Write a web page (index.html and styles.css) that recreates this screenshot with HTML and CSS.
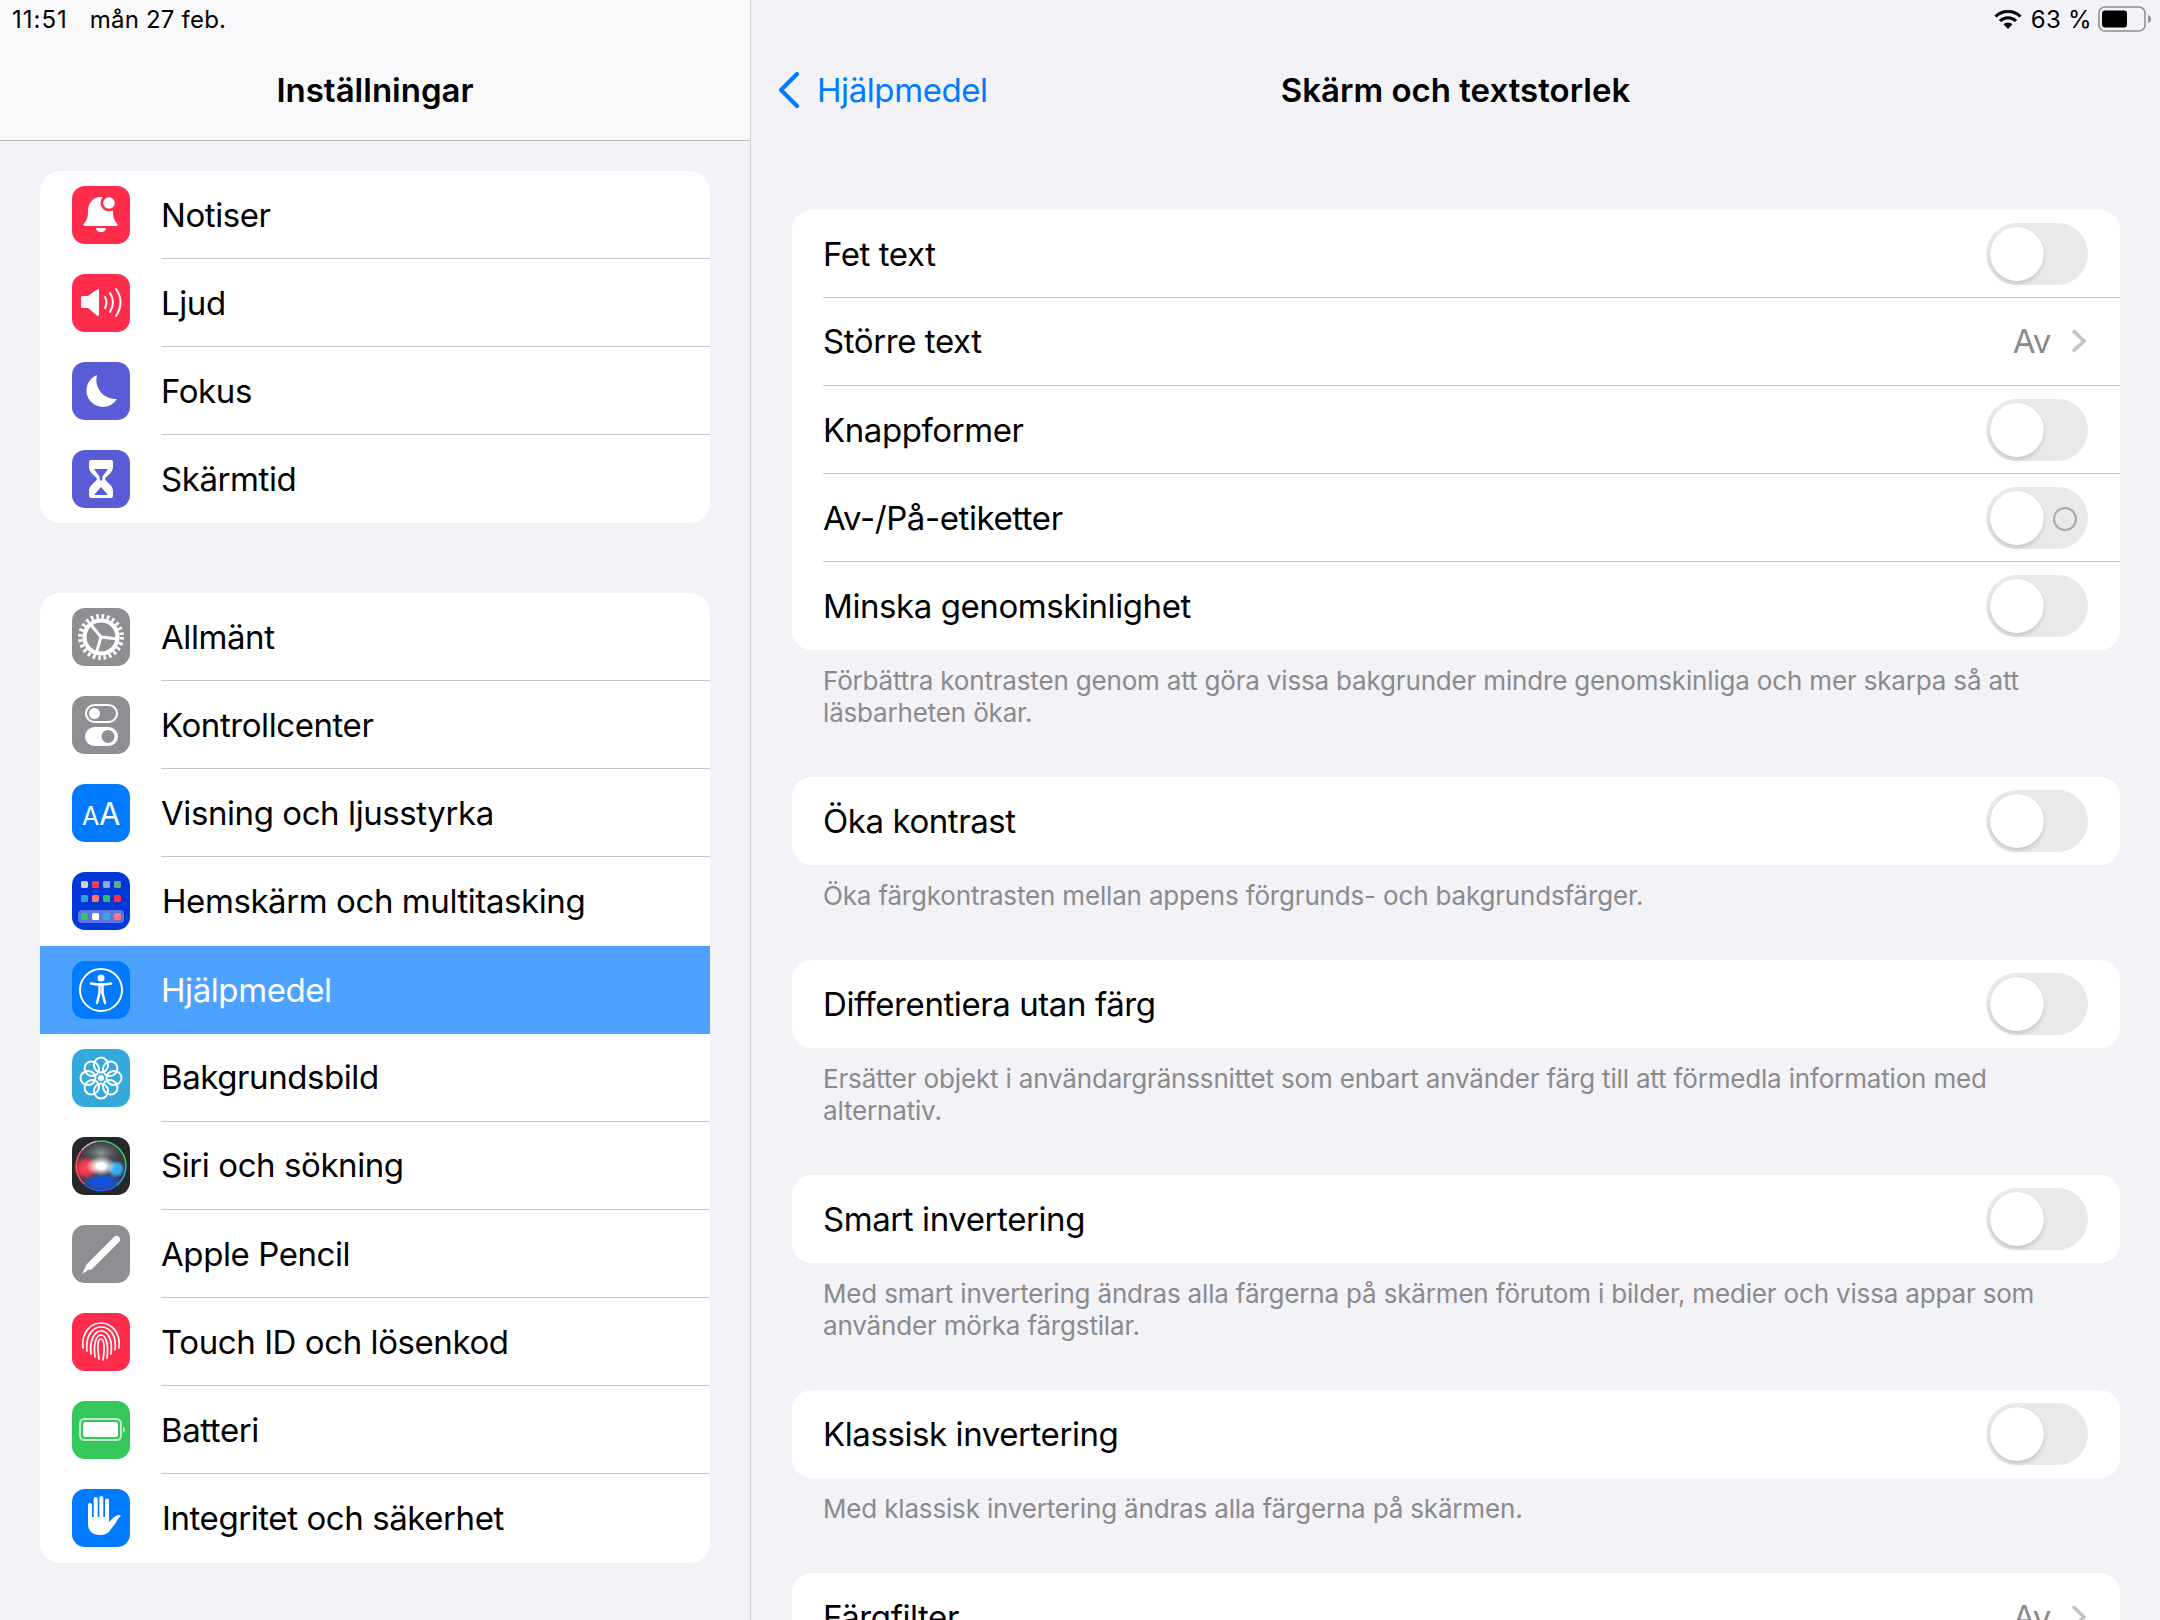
FILE: index.html
```html
<!DOCTYPE html>
<html lang="sv">
<head>
<meta charset="utf-8">
<title>Skärm och textstorlek</title>
<link rel="stylesheet" href="styles.css">
</head>
<body>
<div class="app">
  <aside class="side">
    <header class="side-head">
      <div class="status"><span class="time">11:51</span><span class="date">mån 27 feb.</span></div>
      <div class="side-nav"><h1 class="title">Inställningar</h1></div>
    </header>
    <div class="side-body">
      <ul class="group first-group">
        <li class="srow"><svg class="icon red" viewBox="0 0 58 58"><path fill="#fff" d="M28.500 11c-8 0-12.500 7-12.500 14 0 6-1 9-4 12.500-1.200 1.500-.5 2.500 1 2.500h31c1.500 0 2.200-1 1-2.500-3-3.500-4-6.500-4-12.500 0-7-4.500-14-12.500-14z"/><path fill="#fff" d="M24 42h10c0 2.500-2 4-5 4s-5-1.500-5-4z"/><circle cx="37" cy="17" r="8.500" fill="#ff2d4b"/><circle cx="37" cy="17" r="5.800" fill="#fff"/></svg><div class="scell">Notiser</div></li>
        <li class="srow"><svg class="icon red" viewBox="0 0 58 58"><path fill="#fff" d="M9 23.500q0-1.500 1.500-1.500H16l9-6.500q2-1 2 1v24q0 2-2 1L16 34h-5.500Q9 34 9 32.500z"/><path fill="none" stroke="#fff" stroke-width="2" stroke-linecap="round" d="M33 23q3 5 0 11M38 19q6 9 0 19M44 15q9 13 0 27"/></svg><div class="scell">Ljud</div></li>
        <li class="srow"><svg class="icon indigo" viewBox="0 0 58 58"><path fill="#fff" d="M25 13A16.500 16.500 0 1 0 45 37 19 19 0 0 1 25 13z"/></svg><div class="scell">Fokus</div></li>
        <li class="srow nosep"><svg class="icon indigo" viewBox="0 0 58 58"><path fill="#fff" d="M19 10h20q2 0 2 2v5c0 6-7 9-8 12 1 3 8 6 8 12v5q0 2-2 2H19q-2 0-2-2v-5c0-6 7-9 8-12-1-3-8-6-8-12v-5q0-2 2-2z"/><path fill="#5a5bd6" d="M22 19h14l-5.500 7.500-.5 4h-2l-.5-4zM22 45l7-8 7 8z"/></svg><div class="scell">Skärmtid</div></li>
      </ul>
      <ul class="group second-group">
        <li class="srow"><svg class="icon gray" viewBox="0 0 58 58"><circle cx="29" cy="29" r="20.800" fill="none" stroke="#fff" stroke-width="4.400" stroke-dasharray="2.720 2.720"/><circle cx="29" cy="29" r="16.500" fill="none" stroke="#fff" stroke-width="4.200"/><path fill="none" stroke="#fff" stroke-width="3" d="M29 29L46 31M29 29L19 17M29 29L24 46"/></svg><div class="scell">Allmänt</div></li>
        <li class="srow"><svg class="icon gray" viewBox="0 0 58 58"><rect x="14" y="9" width="31" height="17" rx="8.500" fill="none" stroke="#fff" stroke-width="2"/><circle cx="22.500" cy="17.500" r="5.500" fill="#fff"/><rect x="13" y="31" width="33" height="19" rx="9.500" fill="#fff"/><circle cx="36" cy="40.500" r="6.500" fill="#8e8e93"/></svg><div class="scell">Kontrollcenter</div></li>
        <li class="srow"><svg class="icon blue" viewBox="0 0 58 58"><text class="aa" x="29" y="41" text-anchor="middle"><tspan class="aa-s">A</tspan><tspan class="aa-b">A</tspan></text></svg><div class="scell">Visning och ljusstyrka</div></li>
        <li class="srow nosep"><svg class="icon navy" viewBox="0 0 58 58"><g><rect x="9" y="9" width="7" height="7" rx="1.500" fill="#d2d2d6"/><rect x="20" y="9" width="7" height="7" rx="1.500" fill="#ff3b4b"/><rect x="31" y="9" width="7" height="7" rx="1.500" fill="#8fa2ee"/><rect x="42" y="9" width="7" height="7" rx="1.500" fill="#6aa58a"/><rect x="9" y="23" width="7" height="7" rx="1.500" fill="#33a0d8"/><rect x="20" y="23" width="7" height="7" rx="1.500" fill="#f97878"/><rect x="31" y="23" width="7" height="7" rx="1.500" fill="#2fbf71"/><rect x="42" y="23" width="7" height="7" rx="1.500" fill="#ff2d4b"/><rect x="6" y="38" width="46" height="13" rx="4" fill="#5a76e6"/><rect x="9" y="41" width="7" height="7" rx="1.500" fill="#34c759"/><rect x="20" y="41" width="7" height="7" rx="1.500" fill="#fff"/><rect x="31" y="41" width="7" height="7" rx="1.500" fill="#34aadc"/><rect x="42" y="41" width="7" height="7" rx="1.500" fill="#f97878"/></g></svg><div class="scell hemskarm">Hemskärm och multitasking</div></li>
        <li class="srow selected nosep"><svg class="icon blue" viewBox="0 0 58 58"><circle cx="29" cy="29" r="21" fill="none" stroke="#fff" stroke-width="2"/><circle cx="29" cy="17" r="3.500" fill="#fff"/><path fill="none" stroke="#fff" stroke-width="2.500" stroke-linecap="round" stroke-linejoin="round" d="M19 22.500q10 2 20 0M27.500 24v8L25 42M30.500 24v8L33 42"/></svg><div class="scell">Hjälpmedel</div></li>
        <li class="srow"><svg class="icon sky" viewBox="0 0 58 58"><g fill="none" stroke="#fff" stroke-width="2"><ellipse cx="29" cy="16" rx="7" ry="7.500"/><ellipse cx="29" cy="16" rx="7" ry="7.500" transform="rotate(45 29 29)"/><ellipse cx="29" cy="16" rx="7" ry="7.500" transform="rotate(90 29 29)"/><ellipse cx="29" cy="16" rx="7" ry="7.500" transform="rotate(135 29 29)"/><ellipse cx="29" cy="16" rx="7" ry="7.500" transform="rotate(180 29 29)"/><ellipse cx="29" cy="16" rx="7" ry="7.500" transform="rotate(225 29 29)"/><ellipse cx="29" cy="16" rx="7" ry="7.500" transform="rotate(270 29 29)"/><ellipse cx="29" cy="16" rx="7" ry="7.500" transform="rotate(315 29 29)"/></g><circle cx="29" cy="29" r="3" fill="#fff"/></svg><div class="scell">Bakgrundsbild</div></li>
        <li class="srow"><svg class="icon dark" viewBox="0 0 58 58"><defs><radialGradient id="sr"><stop offset="0" stop-color="#ff4256"/><stop offset=".5" stop-color="#e83a50"/><stop offset="1" stop-color="#ff3b4b" stop-opacity="0"/></radialGradient><radialGradient id="sb"><stop offset="0" stop-color="#1450e0"/><stop offset=".45" stop-color="#1450e0"/><stop offset="1" stop-color="#1e6cf0" stop-opacity="0"/></radialGradient><radialGradient id="sc"><stop offset="0" stop-color="#38a8f0"/><stop offset=".55" stop-color="#38a8f0"/><stop offset="1" stop-color="#38a8f0" stop-opacity="0"/></radialGradient><radialGradient id="sg"><stop offset="0" stop-color="#8c9a92"/><stop offset="1" stop-color="#6a6a70" stop-opacity="0"/></radialGradient><radialGradient id="sw"><stop offset="0" stop-color="#fff"/><stop offset=".3" stop-color="#fff"/><stop offset="1" stop-color="#fff" stop-opacity="0"/></radialGradient></defs><circle cx="29" cy="29" r="25" fill="#3c3c42"/><ellipse cx="29" cy="16" rx="20" ry="12" fill="url(#sg)"/><ellipse cx="14" cy="31" rx="13" ry="12" fill="url(#sr)"/><ellipse cx="30" cy="45" rx="20" ry="9" fill="url(#sb)"/><ellipse cx="44" cy="32" rx="9" ry="9" fill="url(#sc)"/><ellipse cx="29" cy="29" rx="15" ry="10" fill="url(#sw)"/><g fill="none" stroke-width="1.500"><path stroke="#ff4d63" d="M10 13A25 25 0 0 0 12 47"/><path stroke="#30d060" d="M24 4.500A25 25 0 0 1 54 29"/><path stroke="#20b0f0" d="M54 29A25 25 0 0 1 45 48"/><path stroke="#1a60f0" d="M45 48A25 25 0 0 1 12 47"/><path stroke="#b8b8c0" d="M10 13A25 25 0 0 1 24 4.500"/></g></svg><div class="scell">Siri och sökning</div></li>
        <li class="srow"><svg class="icon gray" viewBox="0 0 58 58"><path fill="none" stroke="#fff" stroke-width="7" stroke-linecap="round" d="M44.500 14.500L18 41"/><path fill="#fff" d="M15 39l4 4-9 6z"/></svg><div class="scell">Apple Pencil</div></li>
        <li class="srow"><svg class="icon red" viewBox="0 0 58 58"><path fill="none" stroke="#fff" stroke-width="1.700" stroke-linecap="round" d="M11 35C9 18 20 10 29 10 38 10 49 18 47 35M15 38C13 21 22 14 29 14 37 14 45 21 43 37M19 41C17 25 24 18 29 18 35 18 41 25 39 41M23 44C21 29 25 22 29 22 33 22 37 29 35 45M27 46C25 32 26 26 29 26 32 26 33 34 31 47"/></svg><div class="scell">Touch ID och lösenkod</div></li>
        <li class="srow"><svg class="icon green" viewBox="0 0 58 58"><rect x="8" y="18" width="41" height="21" rx="4.500" fill="none" stroke="#c3e8cd" stroke-width="2"/><rect x="11" y="21" width="35" height="15" rx="2.500" fill="#fff"/><path fill="#c3e8cd" d="M51 25.500q2 1 2 3t-2 3z"/></svg><div class="scell">Batteri</div></li>
        <li class="srow nosep"><svg class="icon blue" viewBox="0 0 58 58"><path fill="#fff" d="M16 16a2 2 0 0 1 4 0V28h1.700V10a2 2 0 0 1 4 0V28h1.600V9a2 2 0 0 1 4 0V28h1.700V11.500a2 2 0 0 1 4 0V33l3-3q4-4 8-4l.8 1q-3 2-5 7L39 40q-3 6-11 6-12 0-12-12z"/></svg><div class="scell integritet">Integritet och säkerhet</div></li>
      </ul>
    </div>
  </aside>
  <main class="detail">
    <header class="detail-head">
      <div class="status status-right">
        <svg class="wifi" viewBox="0 0 28 20"><path fill="none" stroke="#000" stroke-width="3" d="M1.500 7.500a18 18 0 0 1 25 0M6 12a11.500 11.500 0 0 1 16 0"/><path d="M14 20l-4.500-4.800a6.500 6.500 0 0 1 9 0z"/></svg>
        <span class="pct">63 %</span>
        <svg class="batt" viewBox="0 0 53 26"><rect x="1" y="1" width="46" height="24" rx="6" fill="none" stroke="#8e8e93" stroke-width="1.600"/><rect x="4" y="4.500" width="25" height="17" rx="3" fill="#000"/><path fill="#8e8e93" d="M50 9q3 1 3 4t-3 4z"/></svg>
      </div>
      <div class="detail-nav">
        <a class="back"><svg class="back-icon" viewBox="0 0 24 38"><path fill="none" stroke="#007aff" stroke-width="4.200" stroke-linecap="round" stroke-linejoin="round" d="M20 3L4 19l16 16"/></svg><span>Hjälpmedel</span></a>
        <h1 class="title">Skärm och textstorlek</h1>
      </div>
    </header>
    <div class="detail-body">
      <ul class="group card">
        <li class="row"><div class="cell"><span>Fet text</span><i class="toggle"></i></div></li>
        <li class="row"><div class="cell raised"><span>Större text</span><span class="val">Av<svg class="chev" viewBox="0 0 15 24"><path fill="none" stroke="#c4c4c7" stroke-width="3.600" d="M2 1.500L13 12 2 22.500"/></svg></span></div></li>
        <li class="row"><div class="cell"><span>Knappformer</span><i class="toggle"></i></div></li>
        <li class="row"><div class="cell"><span>Av-/På-etiketter</span><i class="toggle labeled"></i></div></li>
        <li class="row"><div class="cell nosep"><span>Minska genomskinlighet</span><i class="toggle"></i></div></li>
      </ul>
      <p class="foot">Förbättra kontrasten genom att göra vissa bakgrunder mindre genomskinliga och mer skarpa så att<br>läsbarheten ökar.</p>
      <ul class="group card">
        <li class="row"><div class="cell nosep"><span>Öka kontrast</span><i class="toggle"></i></div></li>
      </ul>
      <p class="foot">Öka färgkontrasten mellan appens förgrunds- och bakgrundsfärger.</p>
      <ul class="group card">
        <li class="row"><div class="cell nosep"><span>Differentiera utan färg</span><i class="toggle"></i></div></li>
      </ul>
      <p class="foot">Ersätter objekt i användargränssnittet som enbart använder färg till att förmedla information med<br>alternativ.</p>
      <ul class="group card">
        <li class="row"><div class="cell nosep"><span>Smart invertering</span><i class="toggle"></i></div></li>
      </ul>
      <p class="foot">Med smart invertering ändras alla färgerna på skärmen förutom i bilder, medier och vissa appar som<br>använder mörka färgstilar.</p>
      <ul class="group card">
        <li class="row"><div class="cell nosep"><span>Klassisk invertering</span><i class="toggle"></i></div></li>
      </ul>
      <p class="foot">Med klassisk invertering ändras alla färgerna på skärmen.</p>
      <ul class="group card">
        <li class="row"><div class="cell nosep"><span>Färgfilter</span><span class="val">Av<svg class="chev" viewBox="0 0 15 24"><path fill="none" stroke="#c4c4c7" stroke-width="3.600" d="M2 1.500L13 12 2 22.500"/></svg></span></div></li>
      </ul>
    </div>
  </main>
</div>
</body>
</html>
```

FILE: styles.css
```css
* { box-sizing: border-box; }
html, body { margin: 0; padding: 0; }
body {
  width: 2160px;
  height: 1620px;
  overflow: hidden;
  background: #f2f2f7;
  color: #000;
  font-family: Inter, "Liberation Sans", sans-serif;
  font-size: 33px;
  letter-spacing: -0.42px;
}
ul { list-style: none; margin: 0; padding: 0; }
h1, p { margin: 0; }
.app { display: flex; height: 1620px; overflow: hidden; }

/* sidebar */
.side { width: 751px; flex: none; border-right: 1px solid #cfcfd2; background: #f2f2f7; }
.side-head {
  height: 141px;
  background: #f9f9fb;
  border-bottom: 1px solid #bcbcbf;
  display: flex;
  flex-direction: column;
}
.status {
  height: 38px;
  flex: none;
  display: flex;
  align-items: center;
  gap: 21px;
  padding-left: 12px;
  font-size: 24px;
  letter-spacing: 0;
}
.time { letter-spacing: 1px; }
.date { letter-spacing: .2px; margin-left: 1px; }
.side-nav { flex: 1; display: flex; align-items: center; justify-content: center; }
.title { font-size: 33px; font-weight: 600; letter-spacing: 0; padding-top: 1px; }
.side-body { padding: 30px 40px 0; }
.group { background: #fff; border-radius: 20px; overflow: hidden; }
.first-group { margin-bottom: 70px; }
.srow { display: flex; align-items: center; height: 88px; padding-left: 32px; gap: 31px; }
.second-group .srow { height: 88.15px; }
.icon { width: 58px; height: 58px; flex: none; border-radius: 13px; display: block; }
.red { background: #ff2d4b; }
.indigo { background: #5a5bd6; }
.gray { background: #8e8e93; }
.blue { background: #007aff; }
.navy { background: #0238d8; }
.sky { background: #34aadc; }
.dark { background: #26262b; }
.green { background: #34c759; }
.scell {
  flex: 1;
  height: 100%;
  display: flex;
  align-items: center;
  border-bottom: 1px solid #c6c6c8;
}
.nosep .scell { border-bottom: 0; }
.selected { background: #4da2ff; color: #fff; }
.hemskarm, .integritet { padding-left: 1px; }
.aa { fill: #fff; }
.aa-s { font-size: 25px; }
.aa-b { font-size: 31px; }

/* detail */
.detail { flex: 1; min-width: 0; }
.detail-head { height: 140px; display: flex; flex-direction: column; }
.status-right { justify-content: flex-end; gap: 6px; padding: 0 9px 0 0; }
.pct { letter-spacing: .3px; margin-left: 3px; }
.wifi { width: 28px; height: 20px; }
.batt { width: 53px; height: 26px; }
.detail-nav {
  flex: 1;
  display: grid;
  grid-template-columns: 1fr auto 1fr;
  align-items: center;
}
.back { display: flex; align-items: center; gap: 16px; padding: 1px 0 0 26px; color: #007aff; grid-column: 1; }
.back-icon { width: 24px; height: 38px; }
.detail-nav .title { grid-column: 2; }
.detail-body { padding: 70px 40px 0 41px; }
.row { height: 88px; padding-left: 31px; }
.cell {
  height: 100%;
  display: flex;
  align-items: center;
  justify-content: space-between;
  padding-right: 32px;
  border-bottom: 1px solid #c6c6c8;
}
.cell.nosep { border-bottom: 0; }
.cell.raised { padding-bottom: 2px; }
.foot {
  padding: 15px 31px 48px;
  font-size: 26px;
  line-height: 32px;
  letter-spacing: -0.17px;
  color: #8a8a8e;
}
.toggle {
  display: block;
  position: relative;
  width: 102px;
  height: 62px;
  border-radius: 31px;
  background: #e9e9eb;
}
.toggle::before {
  content: "";
  position: absolute;
  left: 4px;
  top: 4px;
  width: 54px;
  height: 54px;
  border-radius: 50%;
  background: #fff;
  box-shadow: 0 3px 4px rgba(0,0,0,.14), 0 0 1px rgba(0,0,0,.12);
}
.labeled::after {
  content: "";
  position: absolute;
  left: 67px;
  top: 20px;
  width: 20px;
  height: 20px;
  border-radius: 50%;
  border: 2px solid #a8a8aa;
}
.val { display: flex; align-items: center; gap: 20px; padding-right: 2px; color: #8a8a8e; }
.chev { width: 15px; height: 24px; }
```
